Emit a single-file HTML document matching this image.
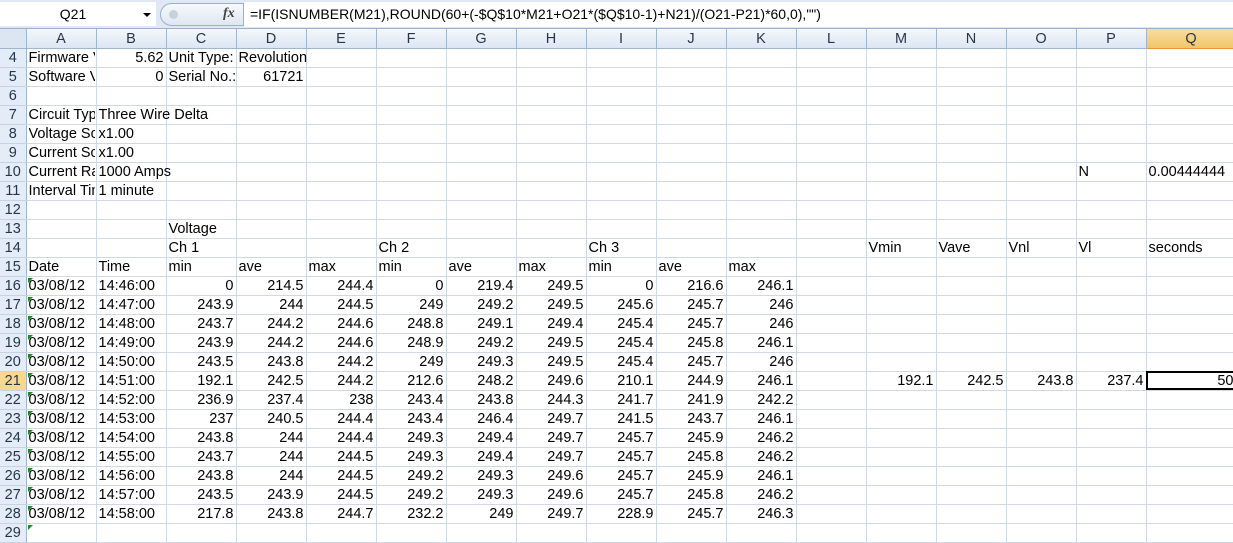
<!DOCTYPE html>
<html><head><meta charset="utf-8"><style>
*{margin:0;padding:0;box-sizing:border-box}
body{width:1233px;height:527px;overflow:hidden;background:#fff;font-family:"Liberation Sans",Arial,sans-serif;font-size:14.5px;color:#000;position:relative}
#fb{position:absolute;left:0;top:0;width:1233px;height:29px;background:#dfe8f4;border-bottom:1px solid #9ab0cc}
#nb{position:absolute;left:0;top:2px;width:156px;height:24px;background:#fff;text-align:center;line-height:24px;font-size:14px;padding-right:10px}
#arr{position:absolute;left:143px;top:13px;width:0;height:0;border-left:4px solid transparent;border-right:4px solid transparent;border-top:4px solid #000}
#pill{position:absolute;left:160px;top:3px;width:84px;height:23px;border:1px solid #9ab0cc;border-radius:12px 0 0 12px;background:linear-gradient(#f6f9fd,#dfe7f2)}
#dot{position:absolute;left:8px;top:6px;width:9px;height:9px;border-radius:50%;background:#c8d0da}
#fx{position:absolute;left:62px;top:2px;font-family:"Liberation Serif",serif;font-style:italic;font-weight:bold;font-size:14px;color:#444}
#fi{position:absolute;left:244px;top:2px;width:989px;height:25px;background:#fff;line-height:25px;padding-left:6px;font-size:14px}
table{position:absolute;left:0;top:29px;border-collapse:collapse;table-layout:fixed;width:1236px}
td{height:19px;border-right:1px solid #d0d7e5;border-bottom:1px solid #d0d7e5;white-space:nowrap;padding:0 2px;line-height:17px;vertical-align:bottom;overflow:visible}
td.r{text-align:right}
td.h{background:linear-gradient(#f4f7fb,#dce6f3);border-right:1px solid #9eb6ce;border-bottom:1px solid #9eb6ce;text-align:center;color:#26364a}
td.n{background:#e4ecf7;border-right:1px solid #9eb6ce;border-bottom:1px solid #c5d3e4;text-align:center;color:#26364a;padding:0}
td.hs{background:linear-gradient(#f9dc9e,#f2c66b);border-color:#f29436}
td.ns{background:#f8d88f}
.c{overflow:hidden;width:66px;display:block}
td.g{position:relative}
td.g:before{content:"";position:absolute;left:1px;top:1px;border-top:5px solid #1e8c1e;border-right:5px solid transparent}
td.sel{outline:2px solid #000;outline-offset:-2px;position:relative}
</style></head><body>
<div id="fb"><div id="nb">Q21</div><div id="arr"></div><div id="pill"><div id="dot"></div><div id="fx">fx</div></div><div id="fi">=IF(ISNUMBER(M21),ROUND(60+(-$Q$10*M21+O21*($Q$10-1)+N21)/(O21-P21)*60,0),"")</div></div>
<table>
<colgroup><col style="width:26px"><col style="width:70px"><col style="width:70px"><col style="width:70px"><col style="width:70px"><col style="width:70px"><col style="width:70px"><col style="width:70px"><col style="width:70px"><col style="width:70px"><col style="width:70px"><col style="width:70px"><col style="width:70px"><col style="width:70px"><col style="width:70px"><col style="width:70px"><col style="width:70px"><col style="width:90px"></colgroup>
<tr><td class="h" style="background:#dce6f3"></td><td class="h">A</td><td class="h">B</td><td class="h">C</td><td class="h">D</td><td class="h">E</td><td class="h">F</td><td class="h">G</td><td class="h">H</td><td class="h">I</td><td class="h">J</td><td class="h">K</td><td class="h">L</td><td class="h">M</td><td class="h">N</td><td class="h">O</td><td class="h">P</td><td class="h hs">Q</td></tr>
<tr><td class="n">4</td><td><span class="c">Firmware Version</span></td><td class="r">5.62</td><td>Unit Type:</td><td>Revolution</td><td></td><td></td><td></td><td></td><td></td><td></td><td></td><td></td><td></td><td></td><td></td><td></td><td></td></tr>
<tr><td class="n">5</td><td><span class="c">Software Version</span></td><td class="r">0</td><td>Serial No.:</td><td class="r">61721</td><td></td><td></td><td></td><td></td><td></td><td></td><td></td><td></td><td></td><td></td><td></td><td></td><td></td></tr>
<tr><td class="n">6</td><td></td><td></td><td></td><td></td><td></td><td></td><td></td><td></td><td></td><td></td><td></td><td></td><td></td><td></td><td></td><td></td><td></td></tr>
<tr><td class="n">7</td><td><span class="c">Circuit Type</span></td><td>Three Wire Delta</td><td></td><td></td><td></td><td></td><td></td><td></td><td></td><td></td><td></td><td></td><td></td><td></td><td></td><td></td><td></td></tr>
<tr><td class="n">8</td><td><span class="c">Voltage Scale</span></td><td>x1.00</td><td></td><td></td><td></td><td></td><td></td><td></td><td></td><td></td><td></td><td></td><td></td><td></td><td></td><td></td><td></td></tr>
<tr><td class="n">9</td><td><span class="c">Current Scale</span></td><td>x1.00</td><td></td><td></td><td></td><td></td><td></td><td></td><td></td><td></td><td></td><td></td><td></td><td></td><td></td><td></td><td></td></tr>
<tr><td class="n">10</td><td><span class="c">Current Range</span></td><td>1000 Amps</td><td></td><td></td><td></td><td></td><td></td><td></td><td></td><td></td><td></td><td></td><td></td><td></td><td></td><td>N</td><td>0.00444444</td></tr>
<tr><td class="n">11</td><td><span class="c">Interval Time</span></td><td>1 minute</td><td></td><td></td><td></td><td></td><td></td><td></td><td></td><td></td><td></td><td></td><td></td><td></td><td></td><td></td><td></td></tr>
<tr><td class="n">12</td><td></td><td></td><td></td><td></td><td></td><td></td><td></td><td></td><td></td><td></td><td></td><td></td><td></td><td></td><td></td><td></td><td></td></tr>
<tr><td class="n">13</td><td></td><td></td><td>Voltage</td><td></td><td></td><td></td><td></td><td></td><td></td><td></td><td></td><td></td><td></td><td></td><td></td><td></td><td></td></tr>
<tr><td class="n">14</td><td></td><td></td><td>Ch 1</td><td></td><td></td><td>Ch 2</td><td></td><td></td><td>Ch 3</td><td></td><td></td><td></td><td>Vmin</td><td>Vave</td><td>Vnl</td><td>Vl</td><td>seconds</td></tr>
<tr><td class="n">15</td><td>Date</td><td>Time</td><td>min</td><td>ave</td><td>max</td><td>min</td><td>ave</td><td>max</td><td>min</td><td>ave</td><td>max</td><td></td><td></td><td></td><td></td><td></td><td></td></tr>
<tr><td class="n">16</td><td class="g">03/08/12</td><td>14:46:00</td><td class="r">0</td><td class="r">214.5</td><td class="r">244.4</td><td class="r">0</td><td class="r">219.4</td><td class="r">249.5</td><td class="r">0</td><td class="r">216.6</td><td class="r">246.1</td><td></td><td></td><td></td><td></td><td></td><td></td></tr>
<tr><td class="n">17</td><td class="g">03/08/12</td><td>14:47:00</td><td class="r">243.9</td><td class="r">244</td><td class="r">244.5</td><td class="r">249</td><td class="r">249.2</td><td class="r">249.5</td><td class="r">245.6</td><td class="r">245.7</td><td class="r">246</td><td></td><td></td><td></td><td></td><td></td><td></td></tr>
<tr><td class="n">18</td><td class="g">03/08/12</td><td>14:48:00</td><td class="r">243.7</td><td class="r">244.2</td><td class="r">244.6</td><td class="r">248.8</td><td class="r">249.1</td><td class="r">249.4</td><td class="r">245.4</td><td class="r">245.7</td><td class="r">246</td><td></td><td></td><td></td><td></td><td></td><td></td></tr>
<tr><td class="n">19</td><td class="g">03/08/12</td><td>14:49:00</td><td class="r">243.9</td><td class="r">244.2</td><td class="r">244.6</td><td class="r">248.9</td><td class="r">249.2</td><td class="r">249.5</td><td class="r">245.4</td><td class="r">245.8</td><td class="r">246.1</td><td></td><td></td><td></td><td></td><td></td><td></td></tr>
<tr><td class="n">20</td><td class="g">03/08/12</td><td>14:50:00</td><td class="r">243.5</td><td class="r">243.8</td><td class="r">244.2</td><td class="r">249</td><td class="r">249.3</td><td class="r">249.5</td><td class="r">245.4</td><td class="r">245.7</td><td class="r">246</td><td></td><td></td><td></td><td></td><td></td><td></td></tr>
<tr><td class="n ns">21</td><td class="g">03/08/12</td><td>14:51:00</td><td class="r">192.1</td><td class="r">242.5</td><td class="r">244.2</td><td class="r">212.6</td><td class="r">248.2</td><td class="r">249.6</td><td class="r">210.1</td><td class="r">244.9</td><td class="r">246.1</td><td></td><td class="r">192.1</td><td class="r">242.5</td><td class="r">243.8</td><td class="r">237.4</td><td class="r sel">50</td></tr>
<tr><td class="n">22</td><td class="g">03/08/12</td><td>14:52:00</td><td class="r">236.9</td><td class="r">237.4</td><td class="r">238</td><td class="r">243.4</td><td class="r">243.8</td><td class="r">244.3</td><td class="r">241.7</td><td class="r">241.9</td><td class="r">242.2</td><td></td><td></td><td></td><td></td><td></td><td></td></tr>
<tr><td class="n">23</td><td class="g">03/08/12</td><td>14:53:00</td><td class="r">237</td><td class="r">240.5</td><td class="r">244.4</td><td class="r">243.4</td><td class="r">246.4</td><td class="r">249.7</td><td class="r">241.5</td><td class="r">243.7</td><td class="r">246.1</td><td></td><td></td><td></td><td></td><td></td><td></td></tr>
<tr><td class="n">24</td><td class="g">03/08/12</td><td>14:54:00</td><td class="r">243.8</td><td class="r">244</td><td class="r">244.4</td><td class="r">249.3</td><td class="r">249.4</td><td class="r">249.7</td><td class="r">245.7</td><td class="r">245.9</td><td class="r">246.2</td><td></td><td></td><td></td><td></td><td></td><td></td></tr>
<tr><td class="n">25</td><td class="g">03/08/12</td><td>14:55:00</td><td class="r">243.7</td><td class="r">244</td><td class="r">244.5</td><td class="r">249.3</td><td class="r">249.4</td><td class="r">249.7</td><td class="r">245.7</td><td class="r">245.8</td><td class="r">246.2</td><td></td><td></td><td></td><td></td><td></td><td></td></tr>
<tr><td class="n">26</td><td class="g">03/08/12</td><td>14:56:00</td><td class="r">243.8</td><td class="r">244</td><td class="r">244.5</td><td class="r">249.2</td><td class="r">249.3</td><td class="r">249.6</td><td class="r">245.7</td><td class="r">245.9</td><td class="r">246.1</td><td></td><td></td><td></td><td></td><td></td><td></td></tr>
<tr><td class="n">27</td><td class="g">03/08/12</td><td>14:57:00</td><td class="r">243.5</td><td class="r">243.9</td><td class="r">244.5</td><td class="r">249.2</td><td class="r">249.3</td><td class="r">249.6</td><td class="r">245.7</td><td class="r">245.8</td><td class="r">246.2</td><td></td><td></td><td></td><td></td><td></td><td></td></tr>
<tr><td class="n">28</td><td class="g">03/08/12</td><td>14:58:00</td><td class="r">217.8</td><td class="r">243.8</td><td class="r">244.7</td><td class="r">232.2</td><td class="r">249</td><td class="r">249.7</td><td class="r">228.9</td><td class="r">245.7</td><td class="r">246.3</td><td></td><td></td><td></td><td></td><td></td><td></td></tr>
<tr><td class="n">29</td><td class="g"></td><td></td><td></td><td></td><td></td><td></td><td></td><td></td><td></td><td></td><td></td><td></td><td></td><td></td><td></td><td></td><td></td></tr>
</table>
</body></html>
